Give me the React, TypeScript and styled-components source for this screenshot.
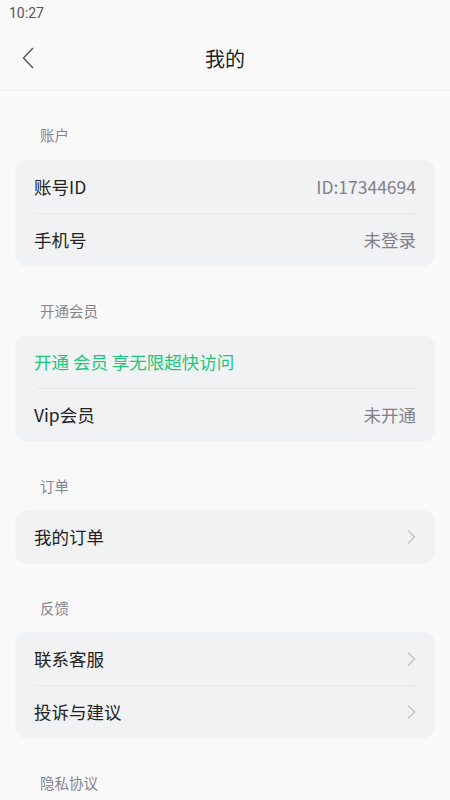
import React from "react";
import styled, { createGlobalStyle } from "styled-components";

const Global = createGlobalStyle`
  html, body { margin: 0; padding: 0; background: #f9f9fa; }
  body { font-family: "Noto Sans CJK SC", "Noto Sans", Roboto, sans-serif; -webkit-font-smoothing: antialiased; }
  * { box-sizing: border-box; }
`;

const Page = styled.div`
  width: 450px;
  min-height: 800px;
  background: #f9f9fa;
  display: flex;
  flex-direction: column;
`;

const StatusBar = styled.div`
  height: 26px;
  padding: 0 9px;
  display: flex;
  align-items: center;
  font-family: Roboto, "Noto Sans", sans-serif;
  font-size: 14px;
  color: #555;
`;

const Header = styled.div`
  height: 65px;
  display: flex;
  align-items: center;
  justify-content: center;
  position: relative;
  border-bottom: 1px solid #efeff1;
`;

const BackButton = styled.button`
  position: absolute;
  left: 18px;
  top: 50%;
  transform: translateY(-50%);
  width: 20px;
  height: 28px;
  padding: 0;
  border: none;
  background: transparent;
  display: flex;
  align-items: center;
  justify-content: center;
`;

const Title = styled.div`
  font-size: 20px;
  color: #222;
`;

const Content = styled.div`
  display: flex;
  flex-direction: column;
  padding: 0 15px;
`;

const SectionLabel = styled.div<{ $first?: boolean }>`
  height: 20px;
  line-height: 20px;
  font-size: 14.5px;
  color: #85858f;
  padding-left: 25px;
  margin-top: ${(p) => (p.$first ? "34px" : "35px")};
  margin-bottom: ${(p) => (p.$first ? "15px" : "14px")};
`;

const Card = styled.div`
  background: #f1f2f4;
  border-radius: 12px;
  display: flex;
  flex-direction: column;
  box-shadow: 0 1px 0 rgba(0, 0, 0, 0.02);
`;

const Row = styled.div`
  height: 53px;
  padding: 0 19px;
  display: flex;
  align-items: center;
  justify-content: space-between;
  & + & {
    position: relative;
  }
  & + &::before {
    content: "";
    position: absolute;
    left: 20px;
    right: 20px;
    top: 0;
    height: 1px;
    background: #e5e6e9;
  }
`;

const RowLabel = styled.span<{ $green?: boolean }>`
  font-size: 17.5px;
  color: ${(p) => (p.$green ? "#1fc67a" : "#222")};
  white-space: pre;
`;

const RowValue = styled.span`
  font-size: 17.5px;
  color: #80808b;
`;

const Chevron = () => (
  <svg width="10" height="16" viewBox="0 0 10 16" fill="none">
    <path d="M2 1.5 L8.5 8 L2 14.5" stroke="#c0c0c4" strokeWidth="1.3" />
  </svg>
);

export default function App() {
  return (
    <Page>
      <Global />
      <StatusBar>10:27</StatusBar>
      <Header>
        <BackButton aria-label="back">
          <svg width="12" height="22" viewBox="0 0 12 22" fill="none">
            <path d="M11 1 L1.5 11 L11 21" stroke="#555" strokeWidth="1.4" />
          </svg>
        </BackButton>
        <Title>我的</Title>
      </Header>
      <Content>
        <SectionLabel $first>账户</SectionLabel>
        <Card>
          <Row>
            <RowLabel>账号ID</RowLabel>
            <RowValue>ID:17344694</RowValue>
          </Row>
          <Row>
            <RowLabel>手机号</RowLabel>
            <RowValue>未登录</RowValue>
          </Row>
        </Card>

        <SectionLabel>开通会员</SectionLabel>
        <Card>
          <Row>
            <RowLabel $green>开通 会员 享无限超快访问</RowLabel>
          </Row>
          <Row>
            <RowLabel>Vip会员</RowLabel>
            <RowValue>未开通</RowValue>
          </Row>
        </Card>

        <SectionLabel>订单</SectionLabel>
        <Card>
          <Row>
            <RowLabel>我的订单</RowLabel>
            <Chevron />
          </Row>
        </Card>

        <SectionLabel>反馈</SectionLabel>
        <Card>
          <Row>
            <RowLabel>联系客服</RowLabel>
            <Chevron />
          </Row>
          <Row>
            <RowLabel>投诉与建议</RowLabel>
            <Chevron />
          </Row>
        </Card>

        <SectionLabel>隐私协议</SectionLabel>
      </Content>
    </Page>
  );
}
